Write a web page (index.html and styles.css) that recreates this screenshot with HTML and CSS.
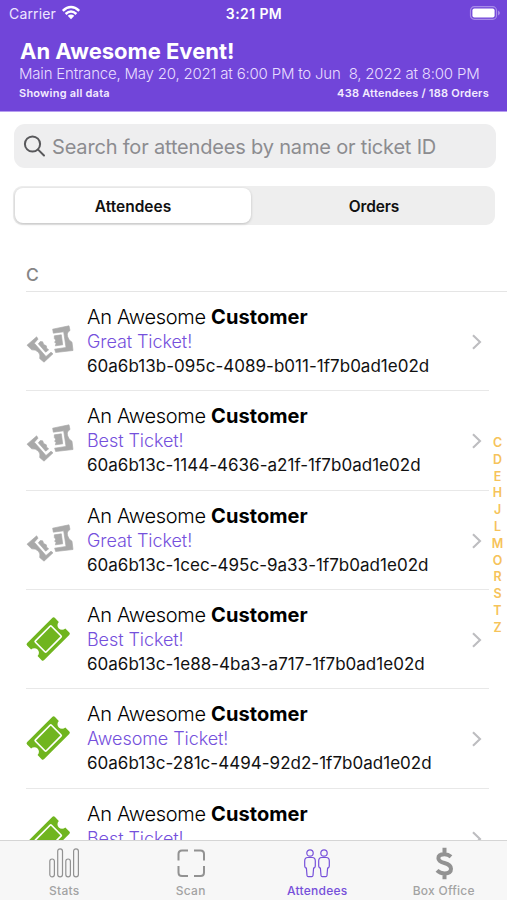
FILE: index.html
```html
<!DOCTYPE html>
<html lang="en">
<head>
<meta charset="utf-8">
<title>An Awesome Event!</title>
<link rel="stylesheet" href="styles.css">
</head>
<body>
<svg class="defs" aria-hidden="true">
  <symbol id="torn" viewBox="75 100 150 125">
    <path class="soft" d="M158 118 207 108 210 122Q199 128 203 141Q205 151 216 157L219 182 167 188 164 178 198 173 191 126 160 130Z"/>
    <path class="soft" d="M163 138 184 135 188 165 166 168 168 161 164 157 167 151 163 146Z"/>
    <path class="soft" d="M81 166 110 141 114 148 103 160 138 200 153 187 159 192 132 217 119 206Q122 194 115 187Q106 178 95 180Z"/>
    <path class="soft" d="M115 162 121 155 128 156 131 164 139 168 140 175 146 180 137 187Z"/>
  </symbol>
  <symbol id="ticket" viewBox="0 0 50 50">
    <g transform="translate(25.2 25) rotate(-45)">
      <path d="M-17.7-12H17.7Q19.6-12 19.6-10.3V-4.6A4.6 4.6 0 0 0 19.6 4.6V10.3Q19.6 12 17.7 12H-17.7Q-19.6 12-19.6 10.3V4.6A4.6 4.6 0 0 0-19.6-4.6V-10.3Q-19.6-12-17.7-12Z"/>
      <rect class="inner" x="-11.3" y="-7.7" width="22.6" height="15.4" rx="1"/>
    </g>
  </symbol>
  <symbol id="chev" viewBox="0 0 12 18"><path d="M2 2.3 9 9 2 15.7"/></symbol>
</svg>
<div class="app">
  <header class="header">
    <div class="status">
      <span class="carrier"><span class="t-carrier">Carrier</span>
        <svg class="wifi" width="20" height="16" viewBox="0 0 20 16"><path d="M1.8 5.8Q10-1.8 18.2 5.8M4.6 9Q10 4 15.4 9"/><path class="dot" d="M6.7 10.8Q10 8.1 13.3 10.8L10 14.2Z"/></svg>
      </span>
      <span class="time">3:21 PM</span>
      <svg class="battery" width="32" height="16" viewBox="0 0 32 16"><rect class="case" x="1.5" y="1.7" width="26" height="12.6" rx="3.8"/><rect class="fill" x="3.4" y="3.6" width="22.2" height="8.8" rx="2"/><path class="tip" d="M29 5.5Q33 8 29 10.5Z"/></svg>
    </div>
    <h1 class="title">An Awesome Event!</h1>
    <p class="venue">Main Entrance, May 20, 2021 at 6:00 PM to Jun&nbsp; 8, 2022 at 8:00 PM</p>
    <div class="totals"><span class="showing">Showing all data</span><span class="counts">438 Attendees / 188 Orders</span></div>
  </header>
  <div class="search">
    <svg width="24" height="24" viewBox="0 0 24 24"><circle cx="9.5" cy="10" r="7.6"/><path d="M15.1 15.6 21 21.5"/></svg>
    <span class="hint">Search for attendees by name or ticket ID</span>
  </div>
  <div class="segments"><div class="segment selected">Attendees</div><div class="segment other">Orders</div></div>
  <main class="list">
    <h2 class="section">C</h2>
    <article class="row"><svg class="icon used"><use href="#torn"/></svg><div class="info"><div class="name">An Awesome <b>Customer</b></div><div class="type">Great Ticket!</div><div class="code">60a6b13b-095c-4089-b011-1f7b0ad1e02d</div></div><svg class="chev"><use href="#chev"/></svg></article>
    <article class="row"><svg class="icon used"><use href="#torn"/></svg><div class="info"><div class="name">An Awesome <b>Customer</b></div><div class="type">Best Ticket!</div><div class="code">60a6b13c-1144-4636-a21f-1f7b0ad1e02d</div></div><svg class="chev"><use href="#chev"/></svg></article>
    <article class="row"><svg class="icon used"><use href="#torn"/></svg><div class="info"><div class="name">An Awesome <b>Customer</b></div><div class="type">Great Ticket!</div><div class="code">60a6b13c-1cec-495c-9a33-1f7b0ad1e02d</div></div><svg class="chev"><use href="#chev"/></svg></article>
    <article class="row"><svg class="icon valid"><use href="#ticket"/></svg><div class="info"><div class="name">An Awesome <b>Customer</b></div><div class="type">Best Ticket!</div><div class="code">60a6b13c-1e88-4ba3-a717-1f7b0ad1e02d</div></div><svg class="chev"><use href="#chev"/></svg></article>
    <article class="row"><svg class="icon valid"><use href="#ticket"/></svg><div class="info"><div class="name">An Awesome <b>Customer</b></div><div class="type">Awesome Ticket!</div><div class="code">60a6b13c-281c-4494-92d2-1f7b0ad1e02d</div></div><svg class="chev"><use href="#chev"/></svg></article>
    <article class="row"><svg class="icon valid"><use href="#ticket"/></svg><div class="info"><div class="name">An Awesome <b>Customer</b></div><div class="type">Best Ticket!</div></div><svg class="chev"><use href="#chev"/></svg></article>
  </main>
  <div class="index"><span>C</span><span>D</span><span>E</span><span>H</span><span>J</span><span>L</span><span>M</span><span>O</span><span>R</span><span>S</span><span>T</span><span>Z</span></div>
  <nav class="tabs">
    <div class="tab"><svg viewBox="0 0 36 36"><g class="thin bars"><rect x="3.8" y="13" width="4.6" height="17.8" rx="2.3"/><rect x="11.7" y="2.8" width="4.8" height="28" rx="2.4"/><rect x="19.8" y="13" width="4.6" height="17.8" rx="2.3"/><rect x="27.6" y="2.8" width="4.8" height="28" rx="2.4"/></g></svg><span>Stats</span></div>
    <div class="tab"><svg viewBox="0 0 36 36"><path class="scan" d="M5.5 14.5V8Q5.5 4.5 9 4.5H15M21 4.5H27.5Q31 4.5 31 8V14.5M31 20V26.5Q31 30 27.5 30H21M15 30H9Q5.5 30 5.5 26.5V20"/></svg><span>Scan</span></div>
    <div class="tab active"><svg viewBox="0 0 36 36"><g class="thin"><circle cx="11" cy="7" r="3.2"/><path d="M8.7 11.5H13.3Q16.3 11.5 16.3 15V19.5Q16.3 22 14.6 22L14 29.5Q13.8 30.6 12.8 30.6H9.2Q8.2 30.6 8 29.5L7.4 22Q5.7 22 5.7 19.5V15Q5.7 11.5 8.7 11.5Z"/><circle cx="25" cy="7" r="3.2"/><path d="M22.7 11.5H27.3Q30.3 11.5 30.3 15V19.5Q30.3 22 28.6 22L28 29.5Q27.8 30.6 26.8 30.6H23.2Q22.2 30.6 22 29.5L21.4 22Q19.7 22 19.7 19.5V15Q19.7 11.5 22.7 11.5Z"/></g></svg><span>Attendees</span></div>
    <div class="tab"><svg viewBox="0 0 36 36"><path class="dollar" d="M25 10.8Q22.2 8.3 18.4 8.3Q12.4 8.3 12.4 12.2Q12.4 15.3 18.4 17Q25 18.8 25 22.8Q25 27.4 18.5 27.4Q14 27.4 11 24.3M18.5 1.7V7M18.5 28V33.2"/></svg><span>Box Office</span></div>
  </nav>
</div>
</body>
</html>
```
FILE: styles.css
```css
* { box-sizing: border-box; }
body { margin: 0; font-family: Inter, "Liberation Sans", sans-serif; background: #fff; color: #111; }
h1, h2, p { margin: 0; }
svg { display: block; flex: none; fill: none; }
.defs { position: absolute; width: 0; height: 0; }
.app { position: relative; width: 507px; height: 900px; overflow: hidden; display: flex; flex-direction: column; white-space: nowrap; }
.header { flex: none; height: 112px; background: #7145d9; color: #fff; border-bottom: 1px solid #b69df0; }
.status { height: 28px; padding: 0 6px 0 9px; display: grid; grid-template-columns: 1fr auto 1fr; align-items: center; font-size: 14px; }
.carrier { display: flex; align-items: center; gap: 5px; color: #eee5ff; letter-spacing: 0.15px; }
.t-carrier { margin-top: -2px; }
.wifi { stroke: #fff; stroke-width: 2.5; margin-top: -2px; }
.wifi .dot { fill: #fff; stroke: none; }
.time { font-weight: 600; letter-spacing: 0.4px; margin: -2px 2px 0 0; }
.battery { justify-self: end; margin-top: -2px; }
.case { stroke: #a78be8; stroke-width: 1.2; }
.fill { fill: #fff; }
.tip { fill: #a78be8; }
.title { margin: 10px 0 0 20px; font-size: 22px; line-height: 26px; font-weight: 700; }
.venue { margin-left: 19px; font-size: 15px; line-height: 19px; font-weight: 300; letter-spacing: -0.2px; color: #e8ddff; }
.totals { display: flex; justify-content: space-between; padding: 2px 18px 0 19px; font-size: 11px; line-height: 16px; font-weight: 600; letter-spacing: 0.23px; color: #f3ecff; }
.search { flex: none; height: 44px; margin: 12px 11px 0 14px; padding-left: 9px; border-radius: 11px; background: #eeeeef; display: flex; align-items: center; gap: 5px; color: #8c8c90; font-size: 20px; letter-spacing: -0.18px; }
.hint { padding-top: 2px; }
.search svg { stroke: #58585b; stroke-width: 2; stroke-linecap: round; }
.segments { flex: none; height: 39px; margin: 18px 12px 0 13px; padding: 2px; border-radius: 9px; background: #eee; display: grid; grid-template-columns: 236px 1fr; font-size: 15.5px; font-weight: 600; color: #111; }
.segment { display: flex; align-items: center; justify-content: center; border-radius: 8px; padding-top: 1px; }
.other { padding-left: 4px; letter-spacing: -0.15px; }
.selected { background: #fff; box-shadow: 0 1px 3px #0003; }
.list { flex: 1; min-height: 0; overflow: hidden; }
.section { height: 67px; margin-left: 26px; padding-top: 38px; border-bottom: 1px solid #e5e5e5; font-size: 17.5px; line-height: 23px; font-weight: 500; color: #858585; }
.row { height: 99.35px; margin: 0 18px 0 26px; border-bottom: 1px solid #e8e8e8; display: flex; align-items: flex-start; }
.icon { width: 50px; height: 50px; margin: 24px 0 0 -3px; }
.used { width: 50px; height: 42px; margin: 31px 0 0 -1px; fill: #a9a9a9; }
.soft { stroke: #a9a9a9; stroke-width: 2; stroke-linejoin: round; }
.valid { fill: #70b51f; }
.inner { stroke: #fff; stroke-width: 1.7; }
.info { margin-left: 14px; padding-top: 13px; flex: 1; min-width: 0; }
.used + .info { margin-left: 12px; }
.name { font-size: 20px; line-height: 24px; font-weight: 300; letter-spacing: -0.3px; color: #000; }
.name b { font-weight: 700; letter-spacing: 0.08px; }
.type { font-size: 18px; line-height: 25px; font-weight: 300; letter-spacing: -0.08px; color: #7550dc; }
.code { font-size: 17px; line-height: 25px; letter-spacing: 0.02px; }
.row .chev { width: 12px; height: 18px; margin: 41px 6px 0 0; stroke: #bdbdc0; stroke-width: 2.1; }
.index { position: absolute; right: 3px; top: 434px; width: 13px; display: grid; grid-auto-rows: 16.82px; justify-items: center; align-items: center; font-size: 12.5px; font-weight: 600; color: #f6c35a; }
.tabs { flex: none; height: 60px; background: #f7f7f7; border-top: 1px solid #d5d5d5; display: grid; grid-template-columns: repeat(4, 126.5px); padding-left: 1px; color: #a3a3a3; font-size: 12px; font-weight: 500; letter-spacing: 0.25px; }
.tab { display: flex; flex-direction: column; align-items: center; padding-top: 5px; }
.tab svg { width: 36px; height: 36px; }
.tab span { line-height: 16px; margin-top: 1px; }
.active { color: #7650da; }
.thin { stroke: currentColor; stroke-width: 1.2; }
.bars { stroke: #929292; }
.scan { stroke: #929292; stroke-width: 2; }
.dollar { stroke: #929292; stroke-width: 4; }
```
